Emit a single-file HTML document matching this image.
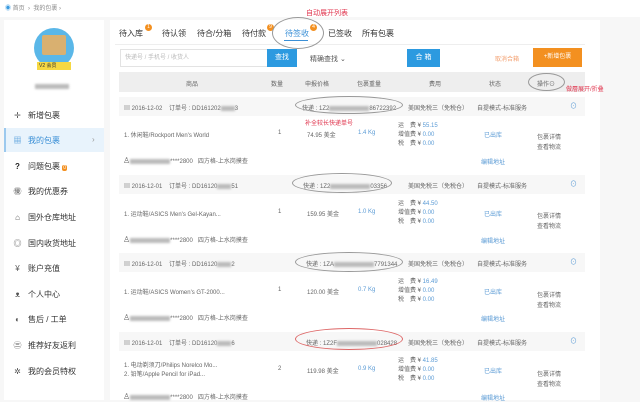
<html><head><style>
*{margin:0;padding:0;box-sizing:border-box}
body{width:640px;height:400px;overflow:hidden;background:#f7f7f7;font-family:"Liberation Sans","Noto Sans CJK SC",sans-serif;font-size:6px;color:#666;position:relative}
.a{position:absolute;white-space:nowrap}
.blur{background:#bbb;filter:blur(1px);height:5px;display:inline-block;vertical-align:middle}
.red{color:#e0334c}
.ell{position:absolute;border:1px solid #999;border-radius:50%}
.badge{position:absolute;width:7px;height:7px;border-radius:50%;background:#f39020;color:#fff;font-size:5px;text-align:center;line-height:7px}
.mi{position:absolute;left:12px;font-size:8px;color:#333}
.mi i{display:inline-block;width:11px;font-style:normal;color:#555;margin-right:5px;text-align:center}
.blue{color:#5b9bd5}
</style></head><body>
<div class="a" style="left:0;top:0;width:640px;height:17px;background:#fff"></div>
<div class="a" style="left:5px;top:3px;font-size:6px;color:#888"><span style="color:#3a9be0">◉</span> 首页 &nbsp;›&nbsp; 我的包裹 ›</div>

<div class="a" style="left:4px;top:20px;width:100px;height:380px;background:#fff"></div>
<div class="a" style="left:34px;top:28px;width:40px;height:40px;border-radius:50%;background:#5ab7e8"></div>
<div class="a" style="left:42px;top:35px;width:24px;height:20px;background:#d9b070;border-radius:2px"></div>
<div class="a" style="left:37px;top:62px;width:34px;height:8px;background:#f6d842;font-size:5px;color:#333;line-height:8px;padding-left:2px">V2 会员</div>
<div class="a blur" style="left:35px;top:84px;width:34px"></div>
<div class="a" style="left:4px;top:128px;width:100px;height:24px;background:#e8f3fc;border-left:2px solid #9cc9ee"></div>
<div class="mi" style="top:110px"><i>✛</i>新增包裹</div>
<div class="mi" style="top:135px;color:#3a8fd6"><i style="color:#3a8fd6">▦</i>我的包裹<span style="position:absolute;left:80px;color:#999">›</span></div>
<div class="mi" style="top:161px"><i style="font-weight:bold;color:#222">?</i>问题包裹 <span style="background:#f39020;color:#fff;font-size:5px;border-radius:2px;padding:0 1px">0</span></div>
<div class="mi" style="top:186px"><i>㊝</i>我的优惠券</div>
<div class="mi" style="top:212px"><i>⌂</i>国外仓库地址</div>
<div class="mi" style="top:238px"><i>◎</i>国内收货地址</div>
<div class="mi" style="top:263px"><i>¥</i>账户充值</div>
<div class="mi" style="top:289px"><i>ᴥ</i>个人中心</div>
<div class="mi" style="top:314px"><i>◐</i>售后 / 工单</div>
<div class="mi" style="top:340px"><i>㊂</i>推荐好友返利</div>
<div class="mi" style="top:366px"><i>✲</i>我的会员特权</div>

<div class="a" style="left:110px;top:20px;width:490px;height:380px;background:#fff"></div>
<div class="a" style="left:119px;top:28px;font-size:8px;color:#333;word-spacing:0">待入库</div>
<div class="a" style="left:162px;top:28px;font-size:8px;color:#333">待认领</div>
<div class="a" style="left:197px;top:28px;font-size:8px;color:#333">待合/分箱</div>
<div class="a" style="left:242px;top:28px;font-size:8px;color:#333">待付款</div>
<div class="a" style="left:285px;top:28px;font-size:8px;color:#3a8fd6">待签收</div>
<div class="a" style="left:328px;top:28px;font-size:8px;color:#333">已签收</div>
<div class="a" style="left:362px;top:28px;font-size:8px;color:#333">所有包裹</div>
<div class="badge" style="left:145px;top:24px">1</div>
<div class="badge" style="left:267px;top:24px">9</div>
<div class="badge" style="left:310px;top:24px">4</div>
<div class="a" style="left:284px;top:40px;width:24px;height:1px;background:#3a8fd6"></div>
<div class="a" style="left:115px;top:44px;width:470px;height:1px;background:#eee"></div>
<div class="ell" style="left:272px;top:17px;width:52px;height:32px"></div>
<div class="a red" style="left:306px;top:8px;font-size:7px">自动展开列表</div>

<div class="a" style="left:120px;top:49px;width:148px;height:18px;border:1px solid #e3e3e3;font-size:6px;color:#bbb;line-height:16px;padding-left:4px">快递号 / 手机号 / 收货人</div>
<div class="a" style="left:267px;top:49px;width:30px;height:18px;background:#2c9ae0;color:#fff;font-size:7px;text-align:center;line-height:18px">查找</div>
<div class="a" style="left:310px;top:54px;font-size:7px;color:#555">精确查找 ⌄</div>
<div class="a" style="left:407px;top:49px;width:33px;height:18px;background:#2c9ae0;color:#fff;font-size:7px;text-align:center;line-height:18px">合 箱</div>
<div class="a" style="left:495px;top:54px;font-size:6px;color:#f3a070">取消合箱</div>
<div class="a" style="left:533px;top:48px;width:49px;height:19px;background:#f39020;color:#fff;font-size:6px;text-align:center;line-height:19px">+新增包裹</div>

<div class="a" style="left:119px;top:72px;width:466px;height:20px;background:#eee"></div>
<div class="a" style="left:186px;top:79px">商品</div>
<div class="a" style="left:271px;top:79px">数量</div>
<div class="a" style="left:305px;top:79px">申报价格</div>
<div class="a" style="left:357px;top:79px">包裹重量</div>
<div class="a" style="left:429px;top:79px">费用</div>
<div class="a" style="left:489px;top:79px">状态</div>
<div class="a" style="left:537px;top:79px">操作⊙</div>
<div class="ell" style="left:528px;top:73px;width:37px;height:18px"></div>
<div class="a red" style="left:566px;top:84px;font-size:6px">做層展开/折叠</div>

<!-- orders -->
<div id="o"></div>
<div class="a" style="left:119px;top:97px;width:466px;height:19px;background:#f7f7f7"></div>
<div class="a" style="left:119px;top:175px;width:466px;height:19px;background:#f7f7f7"></div>
<div class="a" style="left:119px;top:253px;width:466px;height:19px;background:#f7f7f7"></div>
<div class="a" style="left:119px;top:332px;width:466px;height:19px;background:#f7f7f7"></div>

<div class="a" style="left:124px;top:103px">▤ 2016-12-02 &nbsp;&nbsp; 订单号 : DD161202<span class="blur" style="width:14px"></span>3</div>
<div class="a" style="left:302px;top:103px">快递 : 1Z2<span class="blur" style="width:40px"></span>86722392</div>
<div class="ell" style="left:295px;top:96px;width:108px;height:18px"></div>
<div class="a" style="left:408px;top:103px">美国免税三（免税仓）</div>
<div class="a" style="left:477px;top:103px">自提模式-标准服务</div>
<div class="a blue" style="left:570px;top:101px;font-size:7px">⊙</div>
<div class="a red" style="left:305px;top:118px;font-size:6px">补全较长快递单号</div>
<div class="a" style="left:124px;top:130px">1. 休闲鞋/Rockport Men's World</div>
<div class="a" style="left:278px;top:130px">1</div>
<div class="a" style="left:307px;top:130px">74.95 美金</div>
<div class="a blue" style="left:358px;top:130px">1.4 Kg</div>
<div class="a" style="left:398px;top:122px;line-height:9px">运　费 ¥ <span class="blue">55.15</span><br>增值费 ¥ <span class="blue">0.00</span><br>税　费 ¥ <span class="blue">0.00</span></div>
<div class="a blue" style="left:484px;top:130px">已出库</div>
<div class="a" style="left:537px;top:133px;line-height:10px">包裹详情<br>查看物流</div>
<div class="a" style="left:123px;top:156px"><span style="font-size:8px">♙</span><span class="blur" style="width:40px"></span>****2800 &nbsp; 四方格-上水岗摸查</div>
<div class="a blue" style="left:481px;top:157px">编辑地址</div>

<div class="a" style="left:124px;top:181px">▤ 2016-12-01 &nbsp;&nbsp; 订单号 : DD16120<span class="blur" style="width:14px"></span>51</div>
<div class="a" style="left:303px;top:181px">快递 : 1Z2<span class="blur" style="width:40px"></span>03356</div>
<div class="ell" style="left:292px;top:173px;width:100px;height:20px"></div>
<div class="a" style="left:408px;top:181px">美国免税三（免税仓）</div>
<div class="a" style="left:477px;top:181px">自提模式-标准服务</div>
<div class="a blue" style="left:570px;top:179px;font-size:7px">⊙</div>
<div class="a" style="left:124px;top:209px">1. 运动鞋/ASICS Men's Gel-Kayan...</div>
<div class="a" style="left:278px;top:209px">1</div>
<div class="a" style="left:307px;top:209px">159.95 美金</div>
<div class="a blue" style="left:358px;top:209px">1.0 Kg</div>
<div class="a" style="left:398px;top:200px;line-height:9px">运　费 ¥ <span class="blue">44.50</span><br>增值费 ¥ <span class="blue">0.00</span><br>税　费 ¥ <span class="blue">0.00</span></div>
<div class="a blue" style="left:484px;top:209px">已出库</div>
<div class="a" style="left:537px;top:212px;line-height:10px">包裹详情<br>查看物流</div>
<div class="a" style="left:123px;top:235px"><span style="font-size:8px">♙</span><span class="blur" style="width:40px"></span>****2800 &nbsp; 四方格-上水岗摸查</div>
<div class="a blue" style="left:481px;top:236px">编辑地址</div>

<div class="a" style="left:124px;top:259px">▤ 2016-12-01 &nbsp;&nbsp; 订单号 : DD16120<span class="blur" style="width:14px"></span>2</div>
<div class="a" style="left:306px;top:259px">快递 : 1ZA<span class="blur" style="width:40px"></span>7791344</div>
<div class="ell" style="left:295px;top:252px;width:108px;height:20px"></div>
<div class="a" style="left:408px;top:259px">美国免税三（免税仓）</div>
<div class="a" style="left:477px;top:259px">自提模式-标准服务</div>
<div class="a blue" style="left:570px;top:257px;font-size:7px">⊙</div>
<div class="a" style="left:124px;top:287px">1. 运动鞋/ASICS Women's GT-2000...</div>
<div class="a" style="left:278px;top:287px">1</div>
<div class="a" style="left:307px;top:287px">120.00 美金</div>
<div class="a blue" style="left:358px;top:287px">0.7 Kg</div>
<div class="a" style="left:398px;top:278px;line-height:9px">运　费 ¥ <span class="blue">16.49</span><br>增值费 ¥ <span class="blue">0.00</span><br>税　费 ¥ <span class="blue">0.00</span></div>
<div class="a blue" style="left:484px;top:287px">已出库</div>
<div class="a" style="left:537px;top:291px;line-height:10px">包裹详情<br>查看物流</div>
<div class="a" style="left:123px;top:313px"><span style="font-size:8px">♙</span><span class="blur" style="width:40px"></span>****2800 &nbsp; 四方格-上水岗摸查</div>
<div class="a blue" style="left:481px;top:314px">编辑地址</div>

<div class="a" style="left:124px;top:338px">▤ 2016-12-01 &nbsp;&nbsp; 订单号 : DD16120<span class="blur" style="width:14px"></span>6</div>
<div class="a" style="left:306px;top:338px">快递 : 1Z2F<span class="blur" style="width:40px"></span>028428</div>
<div class="ell" style="left:295px;top:328px;width:108px;height:22px;border-color:#d66"></div>
<div class="a" style="left:408px;top:338px">美国免税三（免税仓）</div>
<div class="a" style="left:477px;top:338px">自提模式-标准服务</div>
<div class="a blue" style="left:570px;top:336px;font-size:7px">⊙</div>
<div class="a" style="left:124px;top:362px;line-height:9px">1. 电动剃须刀/Philips Norelco Mo...<br>2. 铅笔/Apple Pencil for iPad...</div>
<div class="a" style="left:278px;top:366px">2</div>
<div class="a" style="left:307px;top:366px">119.98 美金</div>
<div class="a blue" style="left:358px;top:366px">0.9 Kg</div>
<div class="a" style="left:398px;top:357px;line-height:9px">运　费 ¥ <span class="blue">41.85</span><br>增值费 ¥ <span class="blue">0.00</span><br>税　费 ¥ <span class="blue">0.00</span></div>
<div class="a blue" style="left:484px;top:366px">已出库</div>
<div class="a" style="left:537px;top:370px;line-height:10px">包裹详情<br>查看物流</div>
<div class="a" style="left:123px;top:392px"><span style="font-size:8px">♙</span><span class="blur" style="width:40px"></span>****2800 &nbsp; 四方格-上水岗摸查</div>
<div class="a blue" style="left:481px;top:393px">编辑地址</div>
</body></html>
